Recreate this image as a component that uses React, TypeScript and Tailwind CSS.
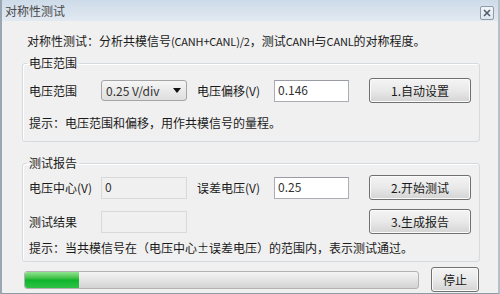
import React from "react";

const font = "font-['Noto_Sans_CJK_SC','Liberation_Sans',sans-serif]";

// latin runs in the reference are set narrower than the CJK glyphs
const Lat: React.FC<{ children: React.ReactNode }> = ({ children }) => (
  <span className="text-[11px] tracking-[-0.2px]">{children}</span>
);

const WinButton: React.FC<{ label: string; className?: string }> = ({ label, className = "" }) => (
  <button
    className={`h-[25px] rounded-[3px] border border-[#707070] bg-gradient-to-b from-[#f4f4f4] via-[#e9e9e9] to-[#d4d4d4] text-[12px] leading-[16px] text-[#1a1a1a] shadow-[inset_0_0_0_1px_#fbfbfb] ${className}`}
  >
    {label}
  </button>
);

const TextBox: React.FC<{ value: string; readOnly?: boolean; className?: string }> = ({ value, readOnly, className = "" }) => (
  <div
    className={`h-[22px] border px-[3px] pt-[1px] text-[12px] leading-[16px] text-[#333] ${
      readOnly ? "border-[#d9d9d9] bg-[#f0f0f0]" : "border-[#abadb3] border-t-[#9a9ca3] bg-white"
    } ${className}`}
  >
    {value}
  </div>
);

const GroupBox: React.FC<{ title: string; className?: string; children: React.ReactNode }> = ({ title, className = "", children }) => (
  <fieldset className={`ml-[20px] mr-[18px] rounded-[3px] border border-[#d5dade] pl-[6px] shadow-[inset_1px_1px_0_#fff] ${className}`}>
    <legend className="-ml-[2px] px-[2px] text-[12px] leading-[16px] text-[#1a1a1a]">{title}</legend>
    {children}
  </fieldset>
);

export default function App() {
  return (
    <div className={`${font} flex h-[294px] w-[500px] flex-col border-l-2 border-r-2 border-b border-l-[#9aa6b2] border-r-[#b5c0cb] border-b-[#8f9aa5] bg-[#f0f0f0] text-[#1a1a1a]`}>
      {/* title bar */}
      <div className="flex h-[21px] items-center justify-between bg-gradient-to-b from-[#cddbe9] to-[#e2e9f1] pl-[3px] pr-[4px]">
        <span className="text-[12px] leading-[16px] text-[#4a4a4a]">对称性测试</span>
        <div className="mt-[5px] flex h-[14px] w-[14px] items-center justify-center rounded-[2px] border border-[#8d9aa8] bg-gradient-to-b from-[#f2f5f8] to-[#dfe6ee]">
          <svg width="8" height="8" viewBox="0 0 8 8">
            <path d="M1 1 L7 7 M7 1 L1 7" stroke="#4f5b68" strokeWidth="1.6" />
          </svg>
        </div>
      </div>

      <p className="mt-[12px] pl-[25px] text-[12px] leading-[16px]">
        对称性测试：分析共模信号<Lat>(CANH+CANL)/2</Lat>，测试<Lat>CANH</Lat>与<Lat>CANL</Lat>的对称程度。
      </p>

      <GroupBox title="电压范围" className="mt-[6px] pb-[10px]">
        <div className="mt-[7px] flex h-[25px] items-center">
          <span className="w-[72px] text-[12px] leading-[16px]">电压范围</span>
          <div className="flex h-[21px] w-[86px] items-center justify-between rounded-[3px] border border-[#a5a5a5] bg-gradient-to-b from-[#f6f6f6] to-[#dedede] pl-[4px] pr-[5px] text-[12px] leading-[16px] text-[#333]">
            <span>0.25 V/div</span>
            <svg width="8" height="5" viewBox="0 0 8 5">
              <path d="M0 0 H8 L4 5 Z" fill="#111" />
            </svg>
          </div>
          <span className="ml-[10px] w-[77px] text-[12px] leading-[16px]">电压偏移(V)</span>
          <TextBox value="0.146" className="w-[75px]" />
          <WinButton label="1.自动设置" className="ml-[20px] w-[102px]" />
        </div>
        <p className="mt-[12px] text-[12px] leading-[16px]">提示：电压范围和偏移，用作共模信号的量程。</p>
      </GroupBox>

      <GroupBox title="测试报告" className="mt-[13px] pb-[5px]">
        <div className="mt-[4px] flex h-[25px] items-center">
          <span className="w-[72px] text-[12px] leading-[16px]">电压中心(V)</span>
          <TextBox value="0" readOnly className="w-[86px]" />
          <span className="ml-[10px] w-[77px] text-[12px] leading-[16px]">误差电压(V)</span>
          <TextBox value="0.25" className="w-[75px]" />
          <WinButton label="2.开始测试" className="ml-[20px] w-[102px]" />
        </div>
        <div className="mt-[9px] flex h-[25px] items-center">
          <span className="w-[72px] text-[12px] leading-[16px]">测试结果</span>
          <TextBox value="" readOnly className="w-[86px]" />
          <div className="w-[162px]" />
          <WinButton label="3.生成报告" className="ml-[20px] w-[102px]" />
        </div>
        <p className="mt-[6px] text-[12px] leading-[16px]">提示：当共模信号在（电压中心±误差电压）的范围内，表示测试通过。</p>
      </GroupBox>

      <div className="mt-[5px] flex items-center pl-[22px]">
        <div className="flex h-[18px] w-[395px] overflow-hidden rounded-[3px] border border-[#b2b2b2] bg-gradient-to-b from-[#f4f4f4] via-[#e4e4e4] to-[#d3d3d3]">
          <div className="h-full w-[54px] rounded-l-[2px] bg-gradient-to-b from-[#8fe68f] via-[#0bb52b] to-[#2cc245]" />
        </div>
        <WinButton label="停止" className="ml-[12px] h-[19px] w-[48px]" />
      </div>
    </div>
  );
}
